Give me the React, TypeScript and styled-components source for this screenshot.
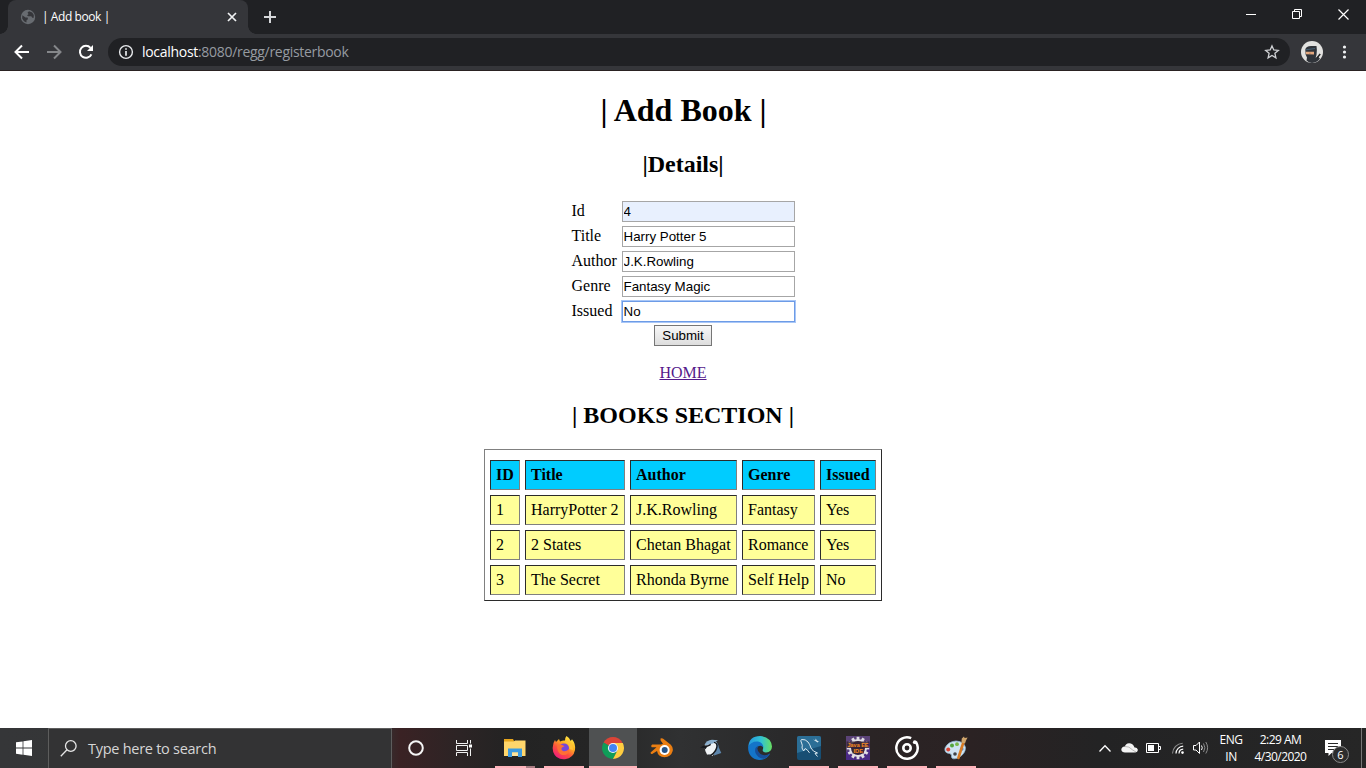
import React from "react";
import styled, { createGlobalStyle, css } from "styled-components";

const GlobalStyle = createGlobalStyle`
  *, *::before, *::after { box-sizing: border-box; }
  body { margin: 0; background: #fff; overflow: hidden; }
`;

const uiFont = css`
  font-family: "Open Sans", "Noto Sans", sans-serif;
`;

const Screen = styled.div`
  width: 1366px;
  height: 768px;
  display: flex;
  flex-direction: column;
  background: #fff;
`;

/* ---------- browser chrome ---------- */

const TabStrip = styled.header`
  ${uiFont}
  height: 34px;
  display: flex;
  background: #202124;
  color: #fff;
`;

const Tab = styled.div`
  position: relative;
  width: 240px;
  height: 34px;
  margin-left: 8px;
  padding: 0 10px 0 12px;
  display: flex;
  align-items: center;
  border-radius: 8px 8px 0 0;
  background: #35363a;

  &::before,
  &::after {
    content: "";
    position: absolute;
    bottom: 0;
    width: 8px;
    height: 8px;
  }
  &::before {
    left: -8px;
    background: radial-gradient(circle at 0 0, transparent 7.5px, #35363a 8px);
  }
  &::after {
    right: -8px;
    background: radial-gradient(circle at 100% 0, transparent 7.5px, #35363a 8px);
  }
`;

const TabTitle = styled.span`
  flex: 1;
  margin-left: 6px;
  font-size: 12px;
  font-weight: 500;
  line-height: 16px;
  letter-spacing: -0.42px;
  white-space: nowrap;
`;

const NewTab = styled.div`
  flex: 1;
  display: flex;
  align-items: center;
  padding-left: 15px;
`;

const WindowButtons = styled.div`
  display: flex;
  height: 28px;
`;

const WindowButton = styled.div`
  width: 46px;
  display: flex;
  align-items: center;
  justify-content: center;
`;

const Toolbar = styled.div`
  ${uiFont}
  height: 37px;
  padding-left: 12px;
  display: flex;
  align-items: center;
  background: #35363a;
  border-bottom: 1px solid #2a2222;
`;

const NavButton = styled.div`
  width: 32px;
  height: 36px;
  display: flex;
  align-items: center;
`;

const Omnibox = styled.div`
  width: 1182px;
  height: 28px;
  padding: 0 10px;
  display: flex;
  align-items: center;
  border-radius: 14px;
  background: #202124;
`;

const Url = styled.div`
  flex: 1;
  margin-left: 8px;
  font-size: 14px;
  line-height: 20px;
  letter-spacing: -0.3px;
  color: #969ba1;
  white-space: nowrap;
`;

const Host = styled.span`
  color: #fff;
`;

const ToolbarEnd = styled.div`
  flex: 1;
  display: flex;
  align-items: center;
  padding-left: 11px;
  gap: 19px;
`;

/* ---------- page ---------- */

const Page = styled.main`
  flex: 1;
  display: flex;
  flex-direction: column;
  align-items: center;
  font: 16px/18px "Liberation Serif", "Times New Roman", serif;
  color: #000;
`;

const PageTitle = styled.h1`
  margin: 21px 0 0;
  padding-left: 1px;
  font-size: 32px;
  line-height: 37px;
`;

const SectionTitle = styled.h2<{ $top: number }>`
  margin: ${(p) => p.$top}px 0 20px;
  font-size: 24px;
  line-height: 27px;
`;

const FormTable = styled.table`
  width: 228px;
  margin-right: 1px;
  table-layout: fixed;
  border-spacing: 2px;

  td {
    height: 23px;
    padding: 1px;
    white-space: nowrap;
  }
  td:first-child {
    width: 48px;
    padding-bottom: 3px;
  }
`;

const Field = styled.input<{ $state?: "filled" | "focus" }>`
  display: block;
  width: 173px;
  height: 21px;
  padding: 1px;
  border: 1px solid ${(p) => (p.$state === "focus" ? "#6d9be6" : "#a6a6a6")};
  border-radius: 0;
  outline: none;
  background: ${(p) => (p.$state === "filled" ? "#e8f0fe" : "#fff")};
  box-shadow: ${(p) => (p.$state === "focus" ? "0 0 0 1px #a9c7f7" : "none")};
  font: 13.333px "Liberation Sans", Arial, sans-serif;
  color: #000;
`;

const SubmitButton = styled.button`
  width: 58px;
  height: 21px;
  padding: 0;
  border: 1px solid #767676;
  border-radius: 0;
  background: linear-gradient(#f8f8f8, #dddddd);
  font: 13.333px "Liberation Sans", Arial, sans-serif;
  color: #000;
`;

const HomeLink = styled.a`
  margin-top: 18px;
  color: #551a8b;
  text-decoration: underline;
`;

const BooksTable = styled.table`
  width: 398px;
  table-layout: fixed;
  border: 1px solid;
  border-color: #808080 #2b2b2b #2b2b2b #808080;
  border-spacing: 5px;
  padding-top: 5px;
`;

const cell = css`
  height: 30px;
  padding: 5px;
  border: 1px solid;
  border-color: #2b2b2b #808080 #808080 #2b2b2b;
  text-align: left;
  white-space: nowrap;
`;

const HeadCell = styled.th<{ $width: number }>`
  ${cell}
  width: ${(p) => p.$width}px;
  background: #00ccff;
`;

const BodyCell = styled.td`
  ${cell}
  background: #ffff99;
`;

/* ---------- taskbar ---------- */

const Taskbar = styled.footer`
  ${uiFont}
  height: 40px;
  display: flex;
  background: linear-gradient(
    90deg,
    #353638 0,
    #343434 380px,
    #3a2224 400px,
    #2c2425 460px,
    #232323 510px,
    #252525 590px,
    #303132 680px,
    #2a2a2b 780px,
    #2a2425 870px,
    #2b2223 970px,
    #232324 1100px,
    #262626 1366px
  );
  color: #fff;
`;

const TaskButton = styled.div<{ $active?: boolean; $gap?: number }>`
  position: relative;
  width: 48px;
  height: 40px;
  margin-left: ${(p) => p.$gap ?? 0}px;
  display: flex;
  align-items: center;
  justify-content: center;
  background: ${(p) => (p.$active ? "#4f5152" : "transparent")};
`;

const RunningBar = styled.i<{ $left: number; $width: number; $dim?: boolean }>`
  position: absolute;
  left: ${(p) => p.$left}px;
  bottom: 0;
  width: ${(p) => p.$width}px;
  height: 2px;
  background: ${(p) => (p.$dim ? "#a87c82" : "#ffb3ba")};
`;

const SearchBox = styled.div`
  width: 344px;
  height: 40px;
  padding-left: 11px;
  display: flex;
  align-items: center;
  border: 1px solid #5d5d5d;
  border-bottom: 0;
  background: #333334;
  font-size: 14.5px;
  letter-spacing: -0.27px;
  color: #d6d6d6;
  white-space: nowrap;
`;

const SearchLabel = styled.span`
  margin: 1px 0 0 11px;
  line-height: 20px;
`;

const Tray = styled.div`
  flex: 1;
  display: flex;
  align-items: center;
  justify-content: flex-end;
`;

const TrayText = styled.div<{ $width: number }>`
  width: ${(p) => p.$width}px;
  height: 34px;
  font-size: 12px;
  line-height: 17px;
  letter-spacing: -0.55px;
  text-align: center;
  white-space: nowrap;
`;

const Notifications = styled.div`
  position: relative;
  width: 40px;
  height: 40px;
  margin: 0 9px 0 3px;
`;

const NotificationCount = styled.span`
  position: absolute;
  left: 20px;
  top: 18px;
  width: 17px;
  height: 17px;
  border: 1px solid #8a8a8a;
  border-radius: 50%;
  background: #2d2d2d;
  font-size: 11px;
  line-height: 15px;
  text-align: center;
`;

const ShowDesktop = styled.div`
  width: 5px;
  height: 40px;
  border-left: 1px solid #777;
`;

/* ---------- icons ---------- */

const GlobeIcon = () => (
  <svg width="16" height="16" viewBox="0 0 16 16">
    <circle cx="8" cy="8" r="7.2" fill="#686c71" />
    <path d="M2.3 6.2 5.5 8.4 7.6 8.5 8 10.2 6.6 11 6.4 13.6 4 12.3 2.2 9.5ZM9 2.3 7.5 3.8 8.6 5 7 6.4 8.4 7.3 11.2 7.2 12.7 9 13.7 8.8 13.8 6 12.2 3.6Z" fill="#35363a" />
  </svg>
);

const CloseTabIcon = () => (
  <svg width="12" height="12" viewBox="0 0 12 12">
    <path d="M2 2 10 10M10 2 2 10" stroke="#f1f3f4" strokeWidth="1.7" />
  </svg>
);

const PlusIcon = () => (
  <svg width="14" height="14" viewBox="0 0 14 14">
    <path d="M7 1V13M1 7H13" stroke="#d5d7da" strokeWidth="2" />
  </svg>
);

const MinimizeIcon = () => (
  <svg width="10" height="11" viewBox="0 0 10 11">
    <path d="M0 5.5H10" stroke="#fff" />
  </svg>
);

const RestoreIcon = () => (
  <svg width="10" height="10" viewBox="0 0 10 10">
    <path d="M.5 2.5H7.5V9.5H.5ZM2.5 2.5V.5H9.5V7.5H7.5" fill="none" stroke="#fff" />
  </svg>
);

const CloseWindowIcon = () => (
  <svg width="11" height="11" viewBox="0 0 11 11">
    <path d="M.5.5 10.5 10.5M10.5.5.5 10.5" stroke="#fff" strokeWidth="1.2" />
  </svg>
);

const ArrowIcon = ({ forward }: { forward?: boolean }) => (
  <svg width="20" height="20" viewBox="0 0 20 20">
    <path
      d={forward ? "M3 10H16M10 3.5 16.5 10 10 16.5" : "M17 10H4M10 3.5 3.5 10 10 16.5"}
      fill="none"
      stroke={forward ? "#85878a" : "#fff"}
      strokeWidth="2"
    />
  </svg>
);

const ReloadIcon = () => (
  <svg width="20" height="20" viewBox="0 0 20 20">
    <path d="M15.4 12.3A6 6 0 1 1 14.5 5.9" fill="none" stroke="#fff" strokeWidth="2" />
    <path d="M17 3V9H11Z" fill="#fff" />
  </svg>
);

const InfoIcon = () => (
  <svg width="16" height="16" viewBox="0 0 16 16">
    <circle cx="8" cy="8" r="6.4" fill="none" stroke="#e8eaed" strokeWidth="1.4" />
    <path d="M8 4.2V5.8M8 7.1V11.8" stroke="#e8eaed" strokeWidth="1.7" />
  </svg>
);

const StarIcon = () => (
  <svg width="16" height="16" viewBox="0 0 16 16">
    <path d="M8 1.9 9.8 6 14.3 6.4 10.9 9.3 11.9 13.8 8 11.4 4.1 13.8 5.1 9.3 1.7 6.4 6.2 6Z" fill="none" stroke="#d0d2d5" strokeWidth="1.3" />
  </svg>
);

const AvatarIcon = () => (
  <svg width="22" height="22" viewBox="0 0 22 22">
    <circle cx="11" cy="11" r="11" fill="#e2e2e0" />
    <path d="M4.3 8.5Q5 5 10 5H15.5Q16.3 9 15.5 14L14.6 16.8 17 15.5 19 17.8Q16 21.5 11 22 7.5 21.8 5.5 19.5L6 16.5 4.6 13.5Z" fill="#30343a" />
    <path d="M4.6 10.8H13V13.4L5 13.3Z" fill="#e3a87f" />
    <path d="M8.2 12.2H9.6" stroke="#a8755a" strokeWidth=".8" />
    <path d="M5 8.8 14 7.5" stroke="#4b6b82" strokeWidth=".8" />
    <path d="M16 17 19.2 13" stroke="#222" strokeWidth="1.5" />
  </svg>
);

const MenuIcon = () => (
  <svg width="6" height="16" viewBox="0 0 6 16" fill="#f1f3f4">
    <circle cx="2.5" cy="3" r="1.6" />
    <circle cx="2.5" cy="8" r="1.6" />
    <circle cx="2.5" cy="13" r="1.6" />
  </svg>
);

const WindowsIcon = () => (
  <svg width="16" height="16" viewBox="0 0 16 16" fill="#fff">
    <path d="M0 2.3 6.6 1.4V7.6H0ZM7.4 1.2 16 0V7.6H7.4ZM0 8.4H6.6V14.7L0 13.8ZM7.4 8.4H16V16L7.4 14.8Z" />
  </svg>
);

const SearchIcon = () => (
  <svg width="17" height="17" viewBox="0 0 17 17" fill="none" stroke="#e6e6e6" strokeWidth="1.3">
    <circle cx="10.8" cy="6" r="5.3" />
    <path d="M7 9.8.8 16.2" />
  </svg>
);

const CortanaIcon = () => (
  <svg width="18" height="18" viewBox="0 0 18 18">
    <circle cx="9" cy="9" r="6.8" fill="none" stroke="#f5f5f5" strokeWidth="2" />
  </svg>
);

const TaskViewIcon = () => (
  <svg width="17" height="16" viewBox="0 0 17 16">
    <path d="M.5 0V3.5H11.5V0M.5 16V12.5H11.5V16M.5 5.5H11.5V10.5H.5ZM14.5 0V3.5M14.5 8.5V16" fill="none" stroke="#f1f1f1" />
    <path d="M13 4.5H16V7.5H13Z" fill="#fff" />
  </svg>
);

const ExplorerIcon = () => (
  <svg width="22" height="20" viewBox="0 0 22 20">
    <path d="M0 1H9L10 3H21V7H0Z" fill="#e7a51c" />
    <path d="M0 3.5 10 3.5 11 2.5H21.5V18H0Z" fill="#ffd66b" />
    <path d="M4 10.5H18V19H14V14.5H8V19H4Z" fill="#3d9be0" />
    <path d="M8 14.5H14V18H8Z" fill="#ffe49b" />
  </svg>
);

const FirefoxIcon = () => (
  <svg width="24" height="24" viewBox="0 0 24 24">
    <defs>
      <linearGradient id="fox" x1=".85" y1="0" x2=".2" y2="1">
        <stop offset="0" stopColor="#fff04f" />
        <stop offset=".35" stopColor="#ffb520" />
        <stop offset=".65" stopColor="#ff4f3d" />
        <stop offset="1" stopColor="#ec1685" />
      </linearGradient>
    </defs>
    <path d="M14.5 0Q18 2 18.7 5L20 3.2Q24 8 23 14 21.5 22 13 23.2 4 24 1.2 16 0 12 1.5 7L3 4 4 6 7 3 8 5.5Q11 4 13 4.5 12.7 2 14.5 0Z" fill="url(#fox)" />
    <circle cx="12" cy="12.4" r="5" fill="#7746d9" />
    <path d="M5 9Q9 7.5 12.5 10.2L10 11.5Q8.5 13.5 11 15 14.5 16 17.3 12.8 17 20 10 19 5 17 5 9Z" fill="#ff6f35" />
    <path d="M12 6Q17.5 6.5 17.5 13L21 14Q21 8 16 5Z" fill="#ffc238" />
  </svg>
);

const ChromeIcon = () => (
  <svg width="22" height="22" viewBox="0 0 22 22">
    <path d="M11 11 1.5 5.5A11 11 0 0 1 20.5 5.5Z" fill="#db4437" />
    <path d="M11 11 1.5 5.5A11 11 0 0 0 11 22L15.3 13.5Z" fill="#0f9d58" />
    <path d="M11 6H20.8A11 11 0 0 1 11 22L15.4 13.4Z" fill="#ffcd40" />
    <circle cx="11" cy="11" r="5.1" fill="#f4f4f4" />
    <circle cx="11" cy="11" r="4" fill="#4285f4" />
  </svg>
);

const BlenderIcon = () => (
  <svg width="24" height="20" viewBox="0 0 24 20">
    <path d="M10.5.6Q12-.2 13.2.7L20.8 6.8Q23.4 9.5 22.7 13 21 19 14.5 19.2 8 18.8 7 13L2.2 16Q.5 16.2.6 14.6L6.5 9.2H1.7Q.5 7.7 2.2 6.6H11L13 5.8 10.6 2.6Z" fill="#ea7e12" />
    <circle cx="14.6" cy="12" r="5" fill="#fff" />
    <circle cx="14.7" cy="12" r="3" fill="#245287" />
  </svg>
);

const BirdIcon = () => (
  <svg width="22" height="19" viewBox="0 0 22 19">
    <path d="M15 2Q18.5 4 18.8 8.5L21.3 14 14 16.5Z" fill="#5d86ac" />
    <path d="M4.5 7Q7 2 12 1.6L16.5 3.5Q17.5 10 12.5 17L7 15.5Q4.8 12 4.5 7Z" fill="#f0f4f6" />
    <path d="M4.5 6Q6.5 1.2 12 .8L18 1.2 13 4.6 7 6Z" fill="#8bb0cf" />
    <path d="M0 8.6 4 6.6 7.5 6.2 11 4.6 10.5 6.6 7 8 5.5 10.2 4.6 9Z" fill="#15191e" />
    <path d="M13.8 4Q16.5 4.3 16.3 7.5 15.2 12.5 10.5 15.5L7.5 15.4 11 17.3Q17.8 12.5 17.8 6.5 17.3 3.3 14.2 2.8Z" fill="#15191e" />
  </svg>
);

const EdgeIcon = () => (
  <svg width="24" height="24" viewBox="0 0 24 24">
    <defs>
      <linearGradient id="edgeTop" x1="0" y1=".4" x2="1" y2=".4">
        <stop offset="0" stopColor="#2496df" />
        <stop offset=".55" stopColor="#32c3d2" />
        <stop offset="1" stopColor="#68df61" />
      </linearGradient>
    </defs>
    <path d="M.2 11Q1 0 12.2 0 23 1 24 10.5 23.8 16 18 16.5 13.5 16 15 13 16 9 11 7 5 6 .2 11Z" fill="url(#edgeTop)" />
    <path d="M.1 11Q3 5 10 5.5 15 6.5 15.5 11.5 13 8.5 10 10.5 6 15 11.5 19.5 17 22 22 17.5 18.5 24.2 11 23.9 0 22.5.1 11Z" fill="#1475c9" />
    <path d="M10 9.5Q6 12 7.5 17 10 22.5 16 22.7 21 20.5 22 17.5 17 20.5 12.5 18 8 14.5 10 9.5Z" fill="#174e99" />
  </svg>
);

const MysqlIcon = () => (
  <svg width="24" height="24" viewBox="0 0 24 24">
    <rect width="24" height="24" rx="2" fill="#174e73" />
    <path d="M0 2Q0 0 2 0H22Q24 0 24 2V10L0 17Z" fill="#2b6e96" />
    <path d="M4.5 3.5Q8.5 3 11 6 13 8.5 14 12 15.5 15.5 20.5 17L18 17.5 20.5 20.5M4.5 3.5Q3 4.5 4.6 7 5.8 9 5 12L6.6 15 8.2 12.5Q10.5 13.5 12.5 16.8" fill="none" stroke="#dbe9f0" strokeWidth="1" />
    <path d="M16 3.5 18.3 4.2 18.8 2.5 19.8 4.6 21.8 5.6 20.6 6.6Z" fill="#d9e7ed" />
  </svg>
);

const gearTeeth = Array.from({ length: 12 }, (_, i) => i * 30);

const JavaIdeIcon = () => (
  <svg width="24" height="24" viewBox="0 0 24 24">
    <rect width="24" height="24" fill="#4b2a86" />
    <path d="M0 0H24V8L0 16Z" fill="#5b4378" />
    <g fill="#e2dfe4">
      {gearTeeth.map((a) => (
        <rect key={a} x="10.6" y=".8" width="2.8" height="4" transform={`rotate(${a} 12 12)`} />
      ))}
    </g>
    <circle cx="12" cy="12" r="8" fill="#32213f" stroke="#e2dfe4" strokeWidth="2" />
    <path d="M.5 5.5H23.5V12H18V17.5H6.5V12H.5Z" fill="#3a2436" opacity=".85" />
    <g fill="#f98a1e" fontFamily="Liberation Sans" fontWeight="700">
      <text x="1.5" y="11" fontSize="6.2" textLength="21" lengthAdjust="spacingAndGlyphs">Java EE</text>
      <text x="7.5" y="17.2" fontSize="6.2" textLength="9.5" lengthAdjust="spacingAndGlyphs">IDE</text>
    </g>
  </svg>
);

const GrooveIcon = () => (
  <svg width="24" height="24" viewBox="0 0 24 24" fill="none" stroke="#fff">
    <path d="M16.2 2.2A10.7 10.7 0 1 0 22.2 8.8L20.8 5.4" strokeWidth="2.5" />
    <circle cx="12" cy="12" r="3.7" strokeWidth="2.6" />
    <circle cx="19.8" cy="6.2" r="1.9" fill="#fff" stroke="none" />
  </svg>
);

const PaintIcon = () => (
  <svg width="24" height="24" viewBox="0 0 24 24">
    <path d="M1 12Q4 5.5 12 5 20 5.5 21.5 11.5 21.5 18 14 22 8 24 7.5 21 8.5 18.5 5.5 17.5 0 17 1 12Z" fill="#cfe3f1" stroke="#8fb6d0" strokeWidth=".8" />
    <circle cx="4.2" cy="13.6" r="2" fill="#dc4637" />
    <circle cx="8" cy="9.4" r="2" fill="#54a53d" />
    <circle cx="13" cy="8.2" r="1.9" fill="#79b84a" />
    <circle cx="17.8" cy="13" r="1.8" fill="#4b86d6" />
    <circle cx="11" cy="18" r="1.8" fill="#3e4247" />
    <path d="M19.2 7 14.4 22" stroke="#d77b25" strokeWidth="2.6" strokeLinecap="round" />
    <path d="M17.4 6.4 17.8 2.4 20 .6 20.6 2 23.6 1.6 22 4.6 21 7.4Z" fill="#cfa56c" />
  </svg>
);

const TrayIcons = () => (
  <svg width="112" height="40" viewBox="0 0 112 40" fill="none" stroke="#fff">
    <path d="M1.5 23.5 7 17.8 12.5 23.5" strokeWidth="1.3" />
    <path d="M27 24.5H36.5Q40 24.3 39.8 21.5 39 19.2 36.5 19.5 34.8 15.2 31 15.3 27.7 15.5 26.8 18.5 23.4 18.8 23.3 21.8 23.8 24.5 27 24.5Z" fill="#f3f3f3" stroke="none" />
    <path d="M27 18.5Q31 18 34.7 22L38 24" stroke="#b9b9b9" />
    <path d="M48.5 15.5H60.5V24.5H48.5ZM60.5 18.5H62.5V21.5H60.5" />
    <path d="M50 17H56V23H50Z" fill="#fff" stroke="none" />
    <circle cx="84.5" cy="24.6" r="1.3" fill="#fff" stroke="none" />
    <path d="M81 25.5A4.5 4.5 0 0 1 85.2 21.2M78 25.5A7.5 7.5 0 0 1 85.2 18.2" strokeWidth="1.2" />
    <path d="M74.5 25.5A10.5 10.5 0 0 1 84.7 15.2" stroke="#8d8d8d" strokeWidth="1.1" />
    <path d="M95.5 17.5H98L101.5 14V25.5L98 22H95.5Z" />
    <path d="M103.5 17.5Q105 19.8 103.5 22" />
    <path d="M105.5 15.5Q108.3 19.8 105.5 24M107.8 14Q111.4 19.8 107.8 25.5" stroke="#8c8c8c" />
  </svg>
);

const BubbleSvg = styled.svg`
  display: block;
  margin: 12px 0 0 13px;
`;

const NotificationIcon = () => (
  <BubbleSvg width="18" height="18" viewBox="0 0 18 18">
    <path d="M0 0H16V13H6.5L3.5 16V13H0Z" fill="#fff" />
    <path d="M3 3.5H13M3 6.5H13M3 9.5H9" stroke="#292929" />
  </BubbleSvg>
);

/* ---------- data ---------- */

const fields: { label: string; value: string; state?: "filled" | "focus" }[] = [
  { label: "Id", value: "4", state: "filled" },
  { label: "Title", value: "Harry Potter 5" },
  { label: "Author", value: "J.K.Rowling" },
  { label: "Genre", value: "Fantasy Magic" },
  { label: "Issued", value: "No", state: "focus" },
];

const columns: [string, number][] = [
  ["ID", 30],
  ["Title", 100],
  ["Author", 107],
  ["Genre", 73],
  ["Issued", 56],
];

const books = [
  ["1", "HarryPotter 2", "J.K.Rowling", "Fantasy", "Yes"],
  ["2", "2 States", "Chetan Bhagat", "Romance", "Yes"],
  ["3", "The Secret", "Rhonda Byrne", "Self Help", "No"],
];

const apps: { icon: React.ReactNode; bars?: [number, number, boolean?][]; active?: boolean }[] = [
  { icon: <ExplorerIcon />, bars: [[4, 31], [35, 9, true]] },
  { icon: <FirefoxIcon />, bars: [[4, 40]] },
  { icon: <ChromeIcon />, bars: [[0, 48]], active: true },
  { icon: <BlenderIcon /> },
  { icon: <BirdIcon /> },
  { icon: <EdgeIcon /> },
  { icon: <MysqlIcon />, bars: [[4, 40]] },
  { icon: <JavaIdeIcon />, bars: [[4, 40]] },
  { icon: <GrooveIcon />, bars: [[4, 40]] },
  { icon: <PaintIcon />, bars: [[4, 40]] },
];

export default function App() {
  return (
    <Screen>
      <GlobalStyle />
      <TabStrip>
        <Tab>
          <GlobeIcon />
          <TabTitle>| Add book |</TabTitle>
          <CloseTabIcon />
        </Tab>
        <NewTab>
          <PlusIcon />
        </NewTab>
        <WindowButtons>
          <WindowButton><MinimizeIcon /></WindowButton>
          <WindowButton><RestoreIcon /></WindowButton>
          <WindowButton><CloseWindowIcon /></WindowButton>
        </WindowButtons>
      </TabStrip>
      <Toolbar>
        <NavButton><ArrowIcon /></NavButton>
        <NavButton><ArrowIcon forward /></NavButton>
        <NavButton><ReloadIcon /></NavButton>
        <Omnibox>
          <InfoIcon />
          <Url><Host>localhost</Host>:8080/regg/registerbook</Url>
          <StarIcon />
        </Omnibox>
        <ToolbarEnd>
          <AvatarIcon />
          <MenuIcon />
        </ToolbarEnd>
      </Toolbar>

      <Page>
        <PageTitle>| Add Book |</PageTitle>
        <SectionTitle $top={22}>|Details|</SectionTitle>
        <FormTable>
          <tbody>
            {fields.map((f) => (
              <tr key={f.label}>
                <td>{f.label}</td>
                <td><Field defaultValue={f.value} $state={f.state} /></td>
              </tr>
            ))}
          </tbody>
        </FormTable>
        <SubmitButton>Submit</SubmitButton>
        <HomeLink>HOME</HomeLink>
        <SectionTitle $top={20}>| BOOKS SECTION |</SectionTitle>
        <BooksTable>
          <thead>
            <tr>
              {columns.map(([name, width]) => (
                <HeadCell key={name} $width={width}>{name}</HeadCell>
              ))}
            </tr>
          </thead>
          <tbody>
            {books.map((row) => (
              <tr key={row[0]}>
                {row.map((value, i) => (
                  <BodyCell key={i}>{value}</BodyCell>
                ))}
              </tr>
            ))}
          </tbody>
        </BooksTable>
      </Page>

      <Taskbar>
        <TaskButton><WindowsIcon /></TaskButton>
        <SearchBox>
          <SearchIcon />
          <SearchLabel>Type here to search</SearchLabel>
        </SearchBox>
        <TaskButton><CortanaIcon /></TaskButton>
        <TaskButton><TaskViewIcon /></TaskButton>
        {apps.map((app, i) => (
          <TaskButton key={i} $active={app.active} $gap={i === 0 ? 3 : 1}>
            {app.icon}
            {app.bars?.map(([left, width, dim]) => (
              <RunningBar key={left} $left={left} $width={width} $dim={dim} />
            ))}
          </TaskButton>
        ))}
        <Tray>
          <TrayIcons />
          <TrayText $width={42}>ENG<br />IN</TrayText>
          <TrayText $width={57}>2:29 AM<br />4/30/2020</TrayText>
          <Notifications>
            <NotificationIcon />
            <NotificationCount>6</NotificationCount>
          </Notifications>
          <ShowDesktop />
        </Tray>
      </Taskbar>
    </Screen>
  );
}
